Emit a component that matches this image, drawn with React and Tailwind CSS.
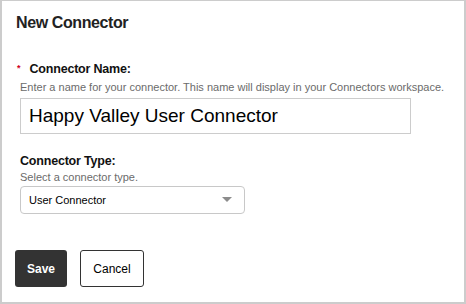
import React from 'react';

const font = { fontFamily: '"Liberation Sans", Arial, sans-serif' };

const Caret = () => (
    <svg width="10" height="6" viewBox="0 0 10 6" className="flex-shrink-0">
        <path d="M0 0 L10 0 L5 5 Z" fill="#8c8c8c" />
    </svg>
);

const App = () => {
    return (
        <div
            className="w-[466px] h-[304px] bg-white border-t border-l-2 border-r-2 border-b-2 border-[#cccccc] px-[13px] text-[#111]"
            style={font}
        >
            <h1 className="mt-[12px] ml-[1px] text-[16px] leading-[20px] font-bold tracking-[-0.4px] text-[#222]">
                New Connector
            </h1>

            <div className="ml-[5px] mt-[29px]">
                <div className="flex items-start text-[12.5px] leading-[15px] font-bold">
                    <span className="-ml-[3px] mr-[9px] text-[9px] leading-[12px] text-[#d0021b]">*</span>
                    <span className="tracking-[-0.2px]">Connector Name:</span>
                </div>
                <p className="mt-[4px] text-[11px] leading-[13px] text-[#6b6b6b]">
                    Enter a name for your connector. This name will display in your Connectors workspace.
                </p>
                <div className="mt-[4px] w-[391px] h-[36px] border border-[#cccccc] flex items-center pl-[8px] text-[19px] text-black">
                    Happy Valley User Connector
                </div>

                <div className="mt-[20px] text-[12.5px] leading-[15px] font-bold tracking-[-0.2px]">
                    Connector Type:
                </div>
                <p className="mt-[2px] text-[11px] leading-[13px] text-[#6b6b6b]">
                    Select a connector type.
                </p>
                <div className="mt-[2px] w-[225px] h-[28px] border border-[#c8c8c8] rounded-[4px] flex items-center justify-between pl-[8px] pr-[12px] text-[11px] text-black">
                    <span>User Connector</span>
                    <Caret />
                </div>
            </div>

            <div className="mt-[36px] flex gap-[13px]">
                <button className="w-[52px] h-[37px] bg-[#333333] rounded-[3px] text-white text-[12px] font-bold">
                    Save
                </button>
                <button className="w-[64px] h-[37px] border border-[#333333] rounded-[3px] text-black text-[12px]">
                    Cancel
                </button>
            </div>
        </div>
    );
};

export default App;
